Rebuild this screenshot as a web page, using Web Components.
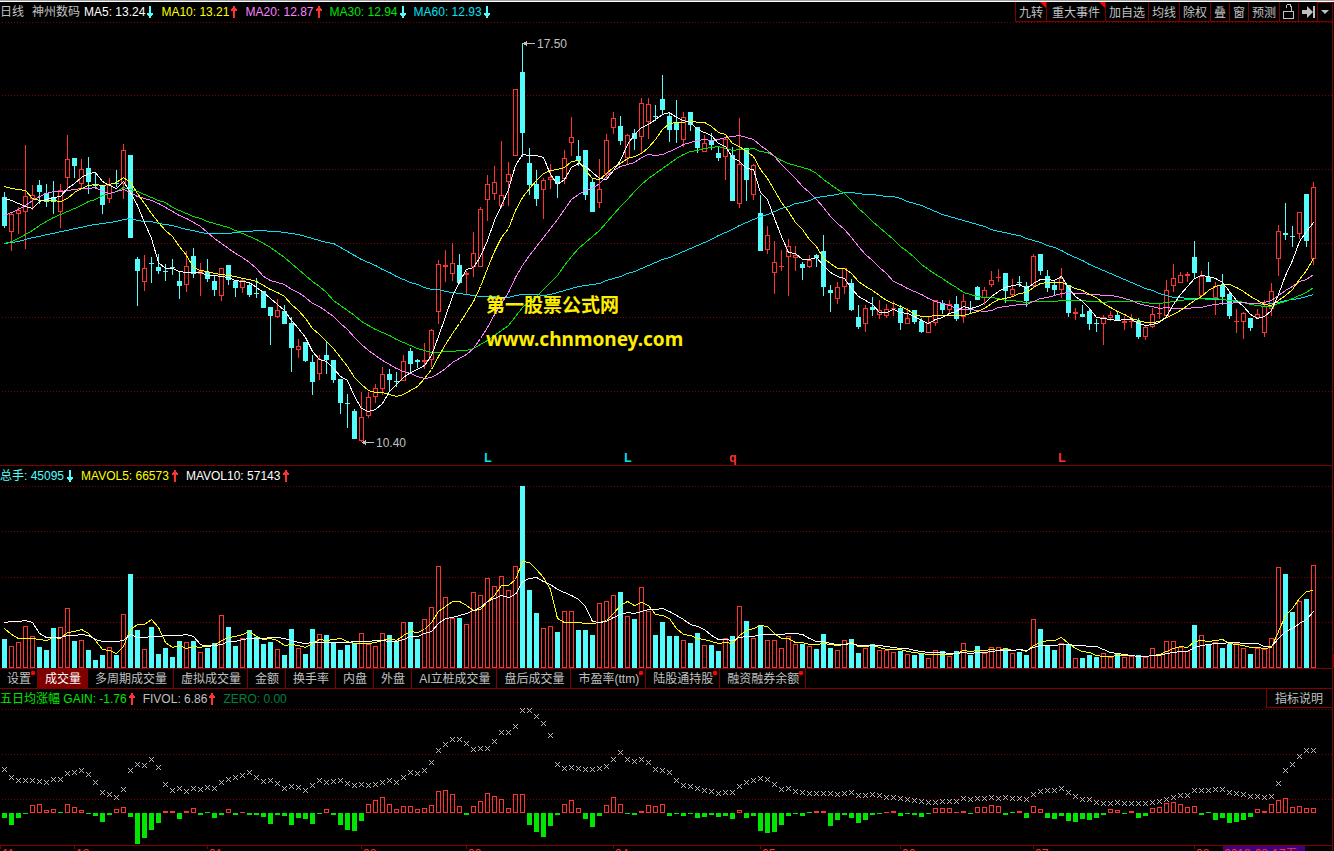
<!DOCTYPE html>
<html lang="zh-CN">
<head>
<meta charset="utf-8">
<title>神州数码 日线</title>
<style>
  html, body { margin: 0; background: #000; }
  body {
    font: 12px/20px "Liberation Sans", "Noto Sans CJK SC", sans-serif;
    color: #c0c0c0;
    overflow: hidden;
  }
</style>
</head>
<body>
<stock-app></stock-app>

<template id="app-tpl">
  <style>
    :host { display: flex; flex-direction: column; height: 100vh; border-top: 1px solid #a0a0a0; box-sizing: border-box; }
    .frame {
      flex: 1; min-height: 0; display: flex; flex-direction: column;
      border-top: 1px solid #fff;
    }
    .inner { flex: 1; min-height: 0; display: flex; flex-direction: column; margin-right: 1px; border-right: 1px solid #800000; }
    header { display: flex; justify-content: space-between; height: 20px; flex: none; }
    .name { display: flex; gap: 8px; margin-right: 4px; }
    .values { display: flex; white-space: nowrap; }
    .volume { --arrow-gap: 3px; }
  </style>
  <div class="frame"><div class="inner">
    <header>
      <div class="values">
        <div class="name"><span>日线</span><span>神州数码</span></div>
        <quote-value color="#ffffff" trend="down">MA5: 13.24</quote-value>
        <quote-value color="#ffff00" trend="up">MA10: 13.21</quote-value>
        <quote-value color="#ff80ff" trend="up">MA20: 12.87</quote-value>
        <quote-value color="#00e600" trend="down">MA30: 12.94</quote-value>
        <quote-value color="#02e2f4" trend="down">MA60: 12.93</quote-value>
      </div>
      <tool-bar></tool-bar>
    </header>
    <price-chart></price-chart>
    <header>
      <div class="values volume">
        <quote-value color="#54fcfc" trend="down">总手: 45095</quote-value>
        <quote-value color="#ffff00" trend="up">MAVOL5: 66573</quote-value>
        <quote-value color="#ffffff" trend="up">MAVOL10: 57143</quote-value>
      </div>
    </header>
    <volume-chart></volume-chart>
    <tab-strip></tab-strip>
    <header>
      <div class="values">
        <quote-value color="#00e600" trend="up">五日均涨幅 GAIN: -1.76</quote-value>
        <quote-value color="#c0c0c0" trend="up">FIVOL: 6.86</quote-value>
        <quote-value color="#008040">ZERO: 0.00</quote-value>
      </div>
      <help-button>指标说明</help-button>
    </header>
    <gain-chart></gain-chart>
    <time-axis></time-axis>
  </div></div>
</template>

<template id="toolbar-tpl">
  <style>
    :host { display: flex; }
    button {
      position: relative; display: flex; align-items: center; justify-content: center;
      box-sizing: border-box; height: 20px; margin: 0; padding: 2px 3px 0;
      background: #000; color: #c0c0c0; font: inherit; white-space: nowrap;
      border: solid #800000; border-width: 0 0 1px 1px; border-radius: 0;
    }
    .wide { padding: 2px 5px 0; }
    .new::after {
      content: ""; position: absolute; top: 0; right: 0;
      border-top: 6px solid #f00; border-left: 6px solid transparent;
    }
    .icon { width: 19px; padding: 0; }
    .drop { width: 15px; padding: 0; border-top-width: 1px; }
    svg { display: block; }
  </style>
  <button class="new">九转</button>
  <button class="new wide">重大事件</button>
  <button>加自选</button>
  <button>均线</button>
  <button>除权</button>
  <button>叠</button>
  <button>窗</button>
  <button>预测</button>
  <button class="icon" aria-label="解锁"><svg width="12" height="15" fill="none" stroke="#c0c0c0" shape-rendering="crispEdges"><rect x=".5" y="7.5" width="10" height="7"/><path d="M8.5 7V3.500L7 .5H4.500L3.500 2v2"/></svg></button>
  <button class="icon" aria-label="最新"><svg width="13" height="12" fill="#c0c0c0"><path d="M0 4h5V0l6 6-6 6V8H0zM11 0h2v12h-2z"/></svg></button>
  <button class="drop" aria-label="更多"><svg width="8" height="5" fill="#c0c0c0"><path d="M0 0h8L4 4z"/></svg></button>
</template>

<template id="tabs-tpl">
  <style>
    :host { display: flex; box-sizing: border-box; height: 21px; flex: none; border: solid #800000; border-width: 1px 0; }
    button {
      position: relative; box-sizing: border-box; margin: 0; padding: 1px 6px 0 7px; height: 19px;
      background: #000; color: #c0c0c0; font: inherit; line-height: 18px; white-space: nowrap;
      border: 0; border-right: 1px solid #800000; border-radius: 0;
    }
    [aria-selected="true"] { background: #800000; color: #fff; }
    .new::after {
      content: ""; position: absolute; top: 2px; right: 2px;
      width: 4px; height: 4px; border-radius: 1px; background: #f00;
    }
  </style>
</template>

<script>
const RED = '#ff3232', CYAN = '#54fcfc', GREEN = '#00e600', DARK = '#800000';

/* Days, oldest first: direction, then the y of high, body top, body bottom, low. */
const DAYS = `c192,197,226,228 r212,214,232,251 r207,210,214,234 r145,196,212,249 r185,195,199,210
c180,185,192,204 c184,193,202,207 c181,197,202,214 r184,190,212,228 r135,159,178,190
c158,158,166,178 r159,169,184,188 c157,168,182,194 c172,185,186,189 c185,185,205,214
r178,185,199,203 c170,183,184,187 r144,150,184,199 c155,155,238,238 c257,259,271,306
r255,268,282,291 c257,263,264,283 c254,267,271,274 c264,271,272,281 c259,267,268,275
c272,281,286,299 r251,266,285,292 c248,256,274,278 r263,271,274,296 c259,272,279,282
c275,281,290,296 r268,268,296,301 c265,265,280,285 c281,281,288,297 r279,280,288,293
c283,285,295,297 c278,293,294,298 c291,291,308,308 c307,307,316,345 r299,310,317,318
c305,311,324,324 c317,323,348,372 r339,346,350,358 c342,342,361,362 c355,362,382,395
r355,359,374,380 c341,355,360,374 c360,360,380,383 c379,379,403,414 c394,403,404,428
c409,411,439,439 r392,417,441,442 r392,397,416,418 r384,388,397,403 r367,374,389,395
c369,374,380,392 c372,381,382,387 r355,361,381,381 c348,351,364,372 c359,360,362,368
r343,360,362,369 r329,330,360,367 r260,264,312,324 r250,265,267,282 r243,263,274,281
c254,265,283,284 r271,273,275,295 r232,253,267,277 r207,209,267,267 r175,184,200,221
r166,182,194,200 r141,195,206,208 r162,174,182,206 r89,89,156,156 c43,72,133,157
c148,163,185,195 c170,184,199,206 r178,180,190,219 r164,177,180,189 c176,176,184,198
r150,158,179,184 r117,137,143,156 c140,156,161,166 c150,150,195,200 c179,182,212,212
r159,189,203,208 r134,140,174,179 r112,118,128,134 c116,126,141,145 r134,135,158,165
c129,133,139,150 r98,103,137,154 r98,104,122,139 c105,116,117,121 c75,99,110,115
c112,116,130,142 c100,123,130,143 r112,117,140,147 c112,112,125,131 c127,127,148,153
r135,143,152,152 c133,141,145,150 c146,153,158,161 r138,139,157,180 c147,155,201,201
r118,164,204,208 c148,148,180,201 r164,165,195,200 c195,213,251,251 r226,235,250,254
r241,262,273,294 r250,266,267,271 r239,246,257,296 r246,255,258,271 c262,264,268,280
r255,260,267,268 c254,255,258,267 c235,251,287,296 c285,290,293,312 r282,287,299,304
r268,268,287,294 c279,283,310,311 c305,317,327,329 r305,308,324,332 c297,307,310,316
r300,310,315,319 r304,309,316,318 r301,308,309,316 c305,308,323,330 r308,318,324,324
c310,310,322,324 c318,321,332,333 r317,323,333,333 r300,300,323,326 c300,303,310,314
r300,304,310,314 c296,304,319,321 r294,301,317,323 c301,308,309,314 c286,287,300,300
r287,290,298,305 r271,280,285,287 r269,277,278,282 c273,273,291,303 r279,289,295,296
c276,282,283,287 c282,286,301,307 r254,256,286,288 c254,254,271,275 c270,276,288,292
c280,285,290,295 r268,278,290,298 c285,285,313,317 r308,312,314,320 c305,314,317,317
c308,311,324,330 c319,323,324,332 r315,317,324,345 r311,315,318,321 c312,315,321,321
r316,321,323,330 r314,321,322,328 c318,321,337,339 r325,327,337,340 r308,314,327,328
r304,313,314,319 r280,290,316,317 r264,278,286,292 r272,275,283,283 r272,274,276,282
c241,257,273,278 r271,276,296,296 c262,277,282,282 r282,286,298,315 c274,285,297,305
c291,294,316,319 r309,321,322,333 r312,313,322,339 c318,318,328,331 r309,314,318,319
r300,306,333,337 r283,291,309,316 r225,231,259,276 c203,233,235,240 c226,236,237,247
r212,212,234,239 c194,194,241,247 r182,187,259,265`.split(/\s+/).map(d => {
  const [high, top, bottom, low] = d.slice(1).split(',').map(Number);
  return { up: d[0] === 'r', high, top, bottom, low, close: d[0] === 'r' ? top : bottom - 1 };
});

const VOLUMES = [29,22,26,42,32,21,18,40,41,60,27,28,18,8,13,21,13,54,94,38,19,41,14,20,11,27,26,27,16,20,
  25,53,41,22,30,38,31,24,26,19,13,39,20,14,39,34,33,26,18,23,25,35,24,22,35,33,27,46,46,29,
  49,61,102,71,50,50,44,76,73,90,82,92,78,102,182,78,55,40,42,36,57,57,38,38,33,65,67,73,76,52,
  49,81,57,33,46,32,32,28,25,35,23,23,17,30,32,62,47,30,43,28,28,20,32,24,24,22,19,34,20,18,
  28,29,15,20,24,18,18,16,17,14,13,14,10,18,17,12,17,25,13,22,15,21,21,20,15,16,13,49,39,22,
  18,25,23,10,10,13,11,15,11,15,11,12,13,11,20,14,27,27,21,17,43,33,23,26,20,24,25,20,14,20,
  19,30,101,94,56,67,69,103];

const FIVOL = [769,777,780,780,780,781,782,779,779,773,772,770,774,782,792,794,797,789,770,764,765,759,767,784,790,
  788,791,788,789,787,788,782,779,777,775,772,777,781,780,783,788,786,787,790,785,780,782,781,780,783,
  785,784,785,784,782,780,782,777,772,773,770,762,750,744,739,739,743,749,748,748,741,732,732,726,710,
  710,716,723,735,764,768,767,768,769,769,768,766,759,752,759,761,759,762,769,770,772,780,785,786,788,
  790,791,793,792,792,786,782,780,778,779,784,789,788,791,792,793,793,793,793,794,793,792,795,795,794,
  795,797,797,798,799,800,801,802,802,801,801,801,798,799,798,798,797,798,797,798,798,799,794,791,790,
  790,788,792,796,799,799,802,803,803,802,803,803,803,803,802,801,799,797,795,795,790,790,790,789,789,
  792,793,794,796,796,797,796,783,770,764,756,750,750];

const GAIN = [-5,-12,-5,-1,8,9,3,4,0,9,6,3,-1,-3,-9,-2,4,6,-4,-31,-25,-17,-10,2,2,-6,2,5,-2,0,
  -5,-2,4,-2,1,-2,-2,-4,-11,-2,-3,-12,-5,-6,-11,-1,4,-2,-12,-17,-18,-8,9,13,16,9,4,7,7,4,
  5,8,22,23,19,7,-2,7,12,20,17,14,5,19,19,-12,-19,-24,-13,-2,9,13,5,-6,-14,-3,8,16,9,-1,
  -2,2,8,7,9,-3,-1,-3,-1,-5,-4,-2,-4,-3,-6,3,-5,-3,-18,-20,-19,-12,-3,-1,-3,0,2,2,-13,-7,
  -2,-5,-10,-7,-2,-1,1,2,-3,-1,-2,-4,-1,5,5,5,1,2,-1,6,6,8,7,-2,0,2,-5,7,4,-5,
  -6,-3,-8,-9,-6,-7,-5,-2,4,3,-1,2,-5,-3,5,6,10,11,9,6,7,-2,0,-7,-5,-10,-9,-7,-4,4,
  2,9,13,15,6,7,5,5];

/* Moving average; the first days come from before the visible range. */
const average = (values, n, lead) => values.map((v, i) => {
  if (i < lead.length) return lead[i];
  let sum = 0;
  for (let k = i - n + 1; k <= i; k++) sum += values[k];
  return Math.round(sum / n);
});

const clone = id => document.getElementById(id).content.cloneNode(true);

class QuoteValue extends HTMLElement {
  connectedCallback() {
    const trend = this.getAttribute('trend');
    const down = trend === 'down';
    const arrow = trend ? `<svg width="6" height="12" fill="${down ? CYAN : RED}" shape-rendering="crispEdges" aria-hidden="true">
      <path d="${down ? 'M2 0h2v7h2v2H5v1H4v2H2v-2H1V9H0V7h2z' : 'M2 12h2V5h2V3H5V2H4V0H2v2H1v1H0v2h2z'}"/></svg>` : '';
    this.attachShadow({ mode: 'open' }).innerHTML = `
      <style>
        :host { display: flex; align-items: center; gap: var(--arrow-gap, 2px); margin-right: 8px; color: ${this.getAttribute('color')}; }
        svg { flex: none; }
      </style><span><slot></slot></span>${arrow}`;
  }
}

class ToolBar extends HTMLElement {
  constructor() { super(); this.attachShadow({ mode: 'open' }).append(clone('toolbar-tpl')); }
}

class HelpButton extends HTMLElement {
  constructor() {
    super();
    this.attachShadow({ mode: 'open' }).innerHTML = `
      <style>
        :host { display: block; }
        button {
          display: block; box-sizing: border-box; height: 19px; margin: 0; padding: 2px 9px 0 8px;
          background: #000; color: #c0c0c0; font: inherit; line-height: 16px; white-space: nowrap;
          border: solid #800000; border-width: 0 0 1px 1px; border-radius: 0;
        }
      </style><button><slot></slot></button>`;
  }
}

class TabStrip extends HTMLElement {
  constructor() {
    super();
    const root = this.attachShadow({ mode: 'open' });
    root.append(clone('tabs-tpl'));
    const names = ['设置*', '成交量', '多周期成交量', '虚拟成交量', '金额', '换手率', '内盘', '外盘',
      'AI立桩成交量', '盘后成交量', '市盈率(ttm)*', '陆股通持股*', '融资融券余额*'];
    names.forEach(name => {
      const tab = document.createElement('button');
      tab.setAttribute('role', 'tab');
      tab.setAttribute('aria-selected', name === '成交量');
      tab.className = name.endsWith('*') ? 'new' : '';
      tab.textContent = name.replace('*', '');
      tab.onclick = () => root.querySelectorAll('button').forEach(b => b.setAttribute('aria-selected', b === tab));
      root.append(tab);
    });
  }
  connectedCallback() { this.setAttribute('role', 'tablist'); }
}

/* Shared drawing for the three charts: the day pitch follows the width. */
class DayChart extends HTMLElement {
  connectedCallback() {
    if (!this.shadowRoot) this.attachShadow({ mode: 'open' });
    this.render();
    addEventListener('resize', () => this.render());
  }
  get pitch() { return Math.max(3, Math.floor(this.clientWidth / DAYS.length)); }
  x(i) { return 4 + i * this.pitch; }
  bar(i, top, bottom, color, hollow) {
    const half = Math.floor((this.pitch - 2) / 2), x = this.x(i) - half;
    if (hollow && bottom - top > 2)
      return `<rect x="${x + .5}" y="${top + .5}" width="${half * 2}" height="${bottom - top - 1}" fill="none" stroke="${color}"/>`;
    return `<rect x="${x}" y="${top}" width="${half * 2 + 1}" height="${bottom - top}" fill="${color}"/>`;
  }
  wick(i, top, bottom, color) {
    return bottom > top ? `<rect x="${this.x(i)}" y="${top}" width="1" height="${bottom - top}" fill="${color}"/>` : '';
  }
  line(values, color) {
    return `<polyline fill="none" stroke="${color}" points="${values.map((y, i) => `${this.x(i) + .5},${y + .5}`).join(' ')}"/>`;
  }
  render() {
    const { top, height, grid } = this.constructor;
    this.shadowRoot.innerHTML = `
      <style>
        :host { display: block; position: relative; height: ${height}px; flex: none; }
        svg { display: block; width: 100%; height: 100%; overflow: visible; }
        span { position: absolute; white-space: nowrap; line-height: 16px; }
        .mark { width: 20px; text-align: center; font-weight: bold; line-height: 14px; }
        .site { color: #ffee00; font: bold 19px/34px "Noto Sans", "Noto Sans CJK SC", sans-serif; }
        ${this.css || ''}
      </style>
      <svg shape-rendering="crispEdges" role="img" aria-label="${this.constructor.label}"><g transform="translate(0 ${-top})">
        ${grid.map(y => `<line x1="2" x2="100%" y1="${y + .5}" y2="${y + .5}" stroke="${DARK}" stroke-dasharray="1 2"/>`).join('')}
        ${this.draw()}
      </g></svg>${this.notes ? this.notes() : ''}`;
  }
}

class PriceChart extends DayChart {
  static top = 22;
  static height = 443;
  static grid = [22, 95, 169, 243, 317, 391];
  static label = 'K线图';
  css = ':host { border-bottom: 1px solid #800000; }';
  draw() {
    const close = DAYS.map(d => d.close);
    const candles = DAYS.map((d, i) => {
      const color = d.up ? RED : CYAN;
      return this.wick(i, d.high, d.top, color) + this.bar(i, d.top, d.bottom, color, d.up) + this.wick(i, d.bottom, d.low, color);
    }).join('');
    const pointer = (i, y) => `<path transform="translate(${this.x(i)} ${y})" d="M1 0h12v1H1zM2-1h2v3H2zM4-2h1v5H4z" fill="#c0c0c0"/>`;
    return candles
      + this.line(average(close, 60, [243,242,241,239,237,236,234,233,231,230,228,227,225,224,223,222,221,219,218,220,
        221,221,223,224,225,227,229,230,232,233,233,233,233,232,231,231,230,230,231,231,
        232,233,234,236,238,240,242,243,247,251,255,259,262,265,269,272,276,279,282]), '#02e2f4')
      + this.line(average(close, 30, [243,241,238,234,230,225,221,217,214,211,208,205,201,199,195,193,191,187,189,191,
        194,197,200,202,207,210,213,216,218]), GREEN)
      + this.line(average(close, 20, [215,212,209,205,200,196,193,191,191,190,189,188,188,187,191,193,191,189,192]), '#ff80ff')
      + this.line(average(close, 10, [186,188,189,190,198,200,200,200,201]), '#ffff00')
      + this.line(average(close, 5, [198,200,203,206]), '#ffffff')
      + pointer(74, 43) + pointer(51, 442);
  }
  notes() {
    const mark = (i, text, color) => `<span class="mark" style="left:${this.x(i) - 9}px;bottom:0;color:${color}">${text}</span>`;
    return `<span style="left:${this.x(74) + 15}px;top:14px">17.50</span>
      <span style="left:${this.x(51) + 15}px;top:413px">10.40</span>
      ${mark(69, 'L', '#02e2f4')}${mark(89, 'L', '#02e2f4')}${mark(104, 'q', RED)}${mark(151, 'L', RED)}
      <span class="site" style="left:${this.x(69) - 1}px;top:266px">第一股票公式网<br>www.chnmoney.com</span>`;
  }
}

class VolumeChart extends DayChart {
  static top = 486;
  static height = 182;
  static grid = [486, 531, 577, 622];
  static label = '成交量';
  draw() {
    const toY = list => list.map(v => 668 - v);
    return VOLUMES.map((v, i) => this.bar(i, 668 - v, 668, DAYS[i].up ? RED : CYAN, DAYS[i].up)).join('')
      + this.line(toY(average(VOLUMES, 5, [40,34,30,30])), '#ffff00')
      + this.line(toY(average(VOLUMES, 10, [46,47,47,48,46,35,31,31,31])), '#ffffff')
      + `<svg x="100%" y="654" overflow="visible"><rect width="2" height="14" fill="${DARK}"/></svg>`;
  }
}

class GainChart extends DayChart {
  static top = 709;
  static height = 136;
  static grid = [709, 754, 799];
  static label = '五日均涨幅';
  draw() {
    return GAIN.map((g, i) => g > 0 ? this.bar(i, 813 - g, 813, RED, true)
        : g < 0 ? this.bar(i, 813, 813 - g, GREEN) : this.bar(i, 812, 813, GREEN)).join('')
      + FIVOL.map((y, i) => `<path d="M${this.x(i) - 2} ${y - 2}l5 5m0-5l-5 5" stroke="#c0c0c0"/>`).join('');
  }
}

class TimeAxis extends HTMLElement {
  connectedCallback() {
    const months = [[0, '11'], [10, '12'], [29, '01'], [51, '02'], [66, '03'], [87, '04'], [108, '05'], [128, '06'], [147, '07'], [170, '08']];
    this.attachShadow({ mode: 'open' });
    const render = () => {
      const pitch = Math.max(3, Math.floor(this.clientWidth / DAYS.length));
      this.shadowRoot.innerHTML = `
        <style>
          :host { display: block; position: relative; flex: 1; overflow: hidden; border-top: 1px solid #800000; color: #ff3232; }
          span { position: absolute; top: 0; padding-left: 2px; line-height: 16px; }
          span::before { content: ""; position: absolute; left: 0; top: 0; height: 3px; border-left: 1px solid #800000; }
          .cursor { background: #400080; padding: 0 8px 0 1px; }
        </style>
        ${months.map(([i, m]) => `<span style="left:${i * pitch + (i ? 4 : 0)}px">${m}</span>`).join('')}
        <span class="cursor" style="left:${174 * pitch + 5}px">2018-08-17五</span>`;
    };
    render();
    addEventListener('resize', render);
  }
}

class StockApp extends HTMLElement {
  constructor() { super(); this.attachShadow({ mode: 'open' }).append(clone('app-tpl')); }
}

customElements.define('quote-value', QuoteValue);
customElements.define('tool-bar', ToolBar);
customElements.define('help-button', HelpButton);
customElements.define('tab-strip', TabStrip);
customElements.define('price-chart', PriceChart);
customElements.define('volume-chart', VolumeChart);
customElements.define('gain-chart', GainChart);
customElements.define('time-axis', TimeAxis);
customElements.define('stock-app', StockApp);
</script>
</body>
</html>
